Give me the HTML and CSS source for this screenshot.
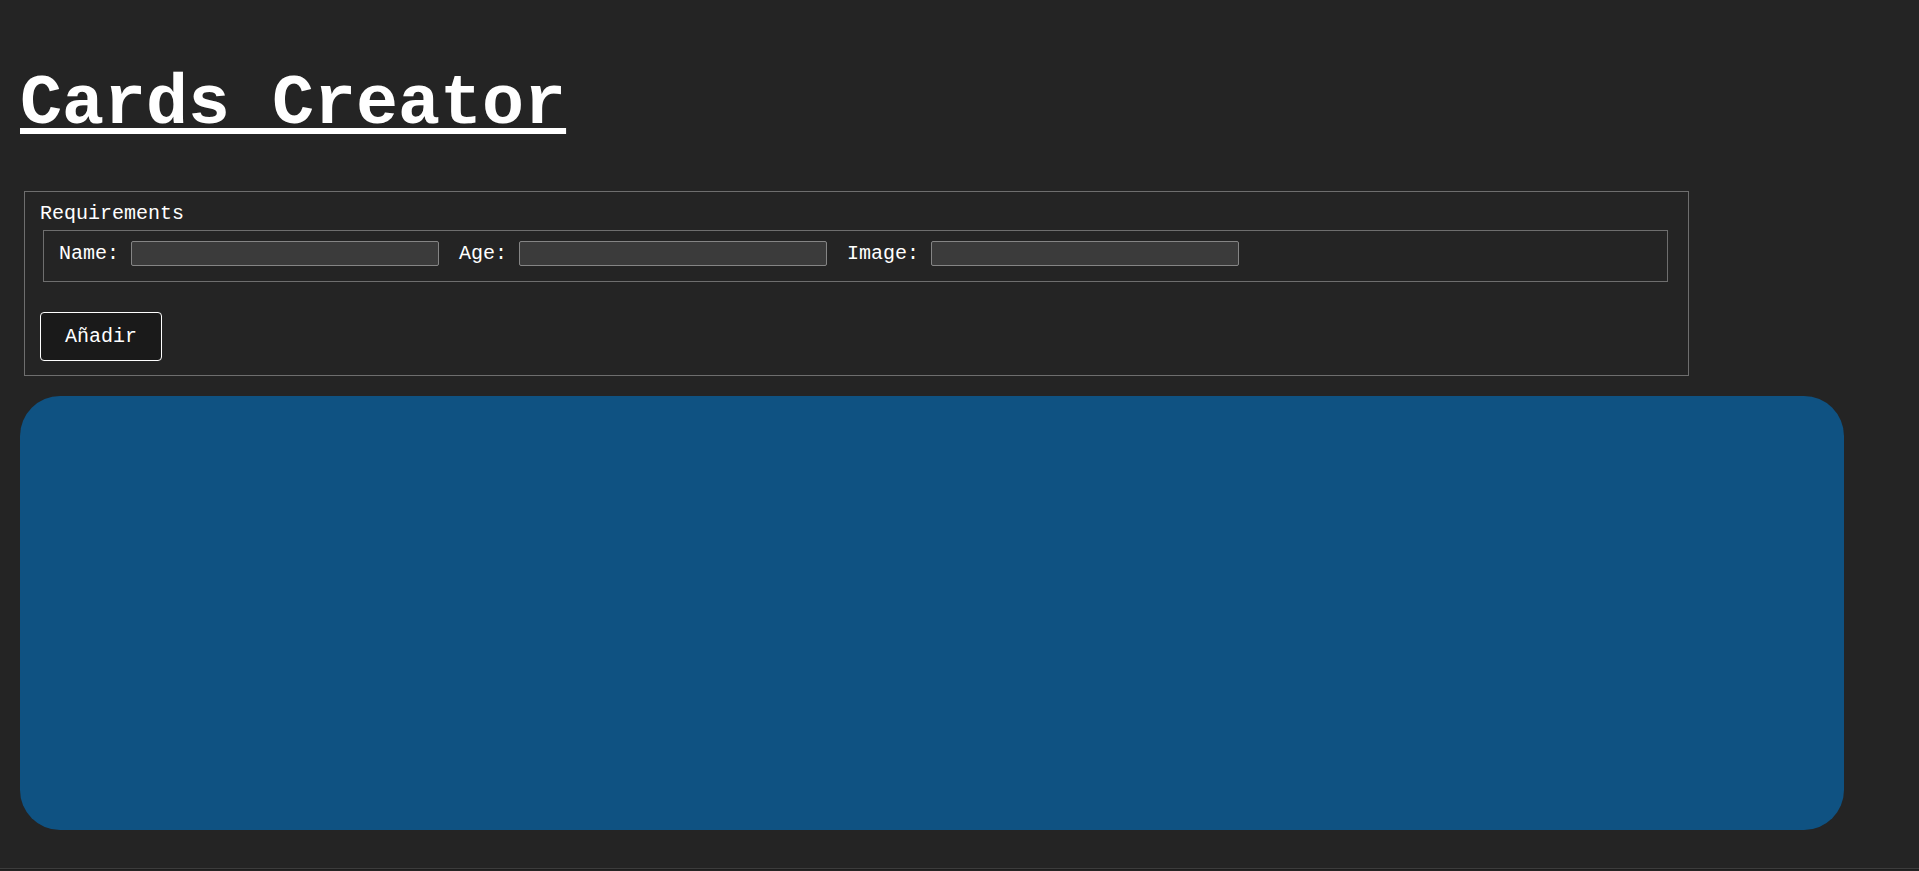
FILE: index.html
```html
<!DOCTYPE html>
<html lang="es">
<head>
  <meta charset="UTF-8">
  <meta name="viewport" content="width=device-width, initial-scale=1.0">
  <title>Cards Creator</title>
  <link rel="stylesheet" href="styles.css">
</head>
<body>
  <div class="app">
    <h1 class="title">Cards Creator</h1>

    <div class="form-box">
      <div class="form-title">Requirements</div>
      <div class="fields">
        <label class="field">Name: <input type="text" class="field-input"></label>
        <label class="field">Age: <input type="text" class="field-input"></label>
        <label class="field">Image: <input type="text" class="field-input"></label>
      </div>
      <button class="add-button">Añadir</button>
    </div>

    <!-- contenedor de las tarjetas -->
    <div class="cards"></div>
  </div>
  <div class="page-bottom"></div>
</body>
</html>
```

FILE: styles.css
```css
body {
  margin: 0;
  background-color: #242424;
  color: #fff;
  font-family: "Courier New", "Liberation Mono", monospace;
  font-size: 20px;
}
.app {
  padding: 0 20px;
}
.title {
  font-size: 70px;
  line-height: 77px;
  font-weight: bold;
  margin: 66px 0 48px;
  text-decoration: underline;
  text-decoration-thickness: 6px;
  text-underline-offset: 5px;
  display: inline-block;
}
.form-box {
  box-sizing: border-box;
  width: 1665px;
  margin: 0 0 20px 4px;
  padding: 10px 15px 14px;
  border: 1px solid #6e6e6e;
}
.form-title {
  line-height: 23px;
  white-space: pre;
}
.fields {
  box-sizing: border-box;
  width: 1625px;
  margin: 5px 0 0 3px;
  padding: 10px 15px 15px;
  border: 1px solid #6e6e6e;
  display: flex;
  align-items: center;
  gap: 20px;
}
.field {
  display: flex;
  align-items: center;
  line-height: 23px;
  white-space: pre;
}
.field-input {
  box-sizing: border-box;
  width: 308px;
  height: 25px;
  margin: 0;
  background-color: #3b3b3b;
  border: 1px solid #858585;
  border-radius: 2px;
  color: #fff;
}
.add-button {
  display: block;
  margin-top: 30px;
  padding: 12px 24px;
  font-family: inherit;
  font-size: 20px;
  line-height: 23px;
  color: #fff;
  background-color: #1a1a1a;
  border: 1px solid #fff;
  border-radius: 4px;
  cursor: pointer;
}
.cards {
  width: 1824px;
  height: 434px;
  background-color: #0f5282;
  border-radius: 40px;
}
.page-bottom {
  margin-top: 38px;
  height: 1px;
  border-top: 1px solid #3c3c3c;
  background-color: #1d1d1d;
}
```
